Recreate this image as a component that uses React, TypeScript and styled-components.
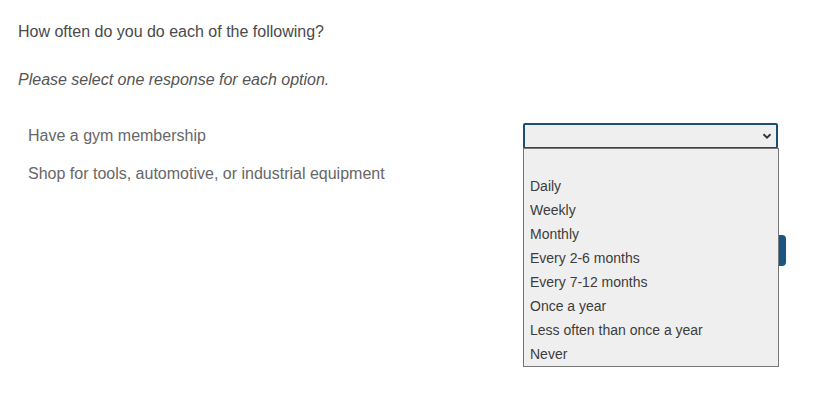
import React from "react";
import styled, { createGlobalStyle } from "styled-components";

const Global = createGlobalStyle`
  html, body { margin: 0; padding: 0; background: #ffffff; }
  body { font-family: "Liberation Sans", Arial, sans-serif; }
`;

const Page = styled.div`
  box-sizing: border-box;
  min-height: 403px;
  padding: 22px 45px 0 18px;
  width: 831px;
`;

const Heading = styled.div`
  font-size: 16px;
  line-height: 20px;
  color: #4a4a4a;
`;

const Instruction = styled.div`
  margin-top: 28px;
  font-size: 16px;
  line-height: 20px;
  font-style: italic;
  color: #555555;
`;

const Table = styled.div`
  margin-top: 27px;
  display: flex;
  flex-direction: column;
`;

const Row = styled.div`
  height: 38px;
  display: flex;
  align-items: center;
  justify-content: space-between;
  padding: 0 8px 0 10px;
`;

const Label = styled.div`
  font-size: 16px;
  line-height: 20px;
  color: #676767;
`;

const SelectWrap = styled.div`
  position: relative;
  width: 255px;
`;

const SelectBox = styled.div<{ $open?: boolean }>`
  box-sizing: border-box;
  height: 26px;
  background: #efefef;
  border: 2px solid ${(p) => (p.$open ? "#1c4e70" : "#767676")};
  border-radius: 2px;
  display: flex;
  align-items: center;
  justify-content: flex-end;
  padding-right: 4px;
`;

const Chevron = styled.svg`
  width: 10px;
  height: 10px;
  display: block;
`;

const List = styled.ul`
  position: absolute;
  top: 25px;
  left: 0;
  z-index: 5;
  box-sizing: border-box;
  width: 256px;
  margin: 0;
  padding: 1px 0 0;
  list-style: none;
  background: #efefef;
  border: 1px solid #767676;
`;

const Option = styled.li`
  height: 24px;
  line-height: 24px;
  padding-left: 6px;
  font-size: 14px;
  color: #3c3c3c;
`;

const Footer = styled.div`
  margin-top: 42px;
  display: flex;
  justify-content: flex-end;
`;

const NextButton = styled.button`
  height: 31px;
  width: 90px;
  border: none;
  border-radius: 4px;
  background: #1b5683;
  color: #ffffff;
  font-family: "Liberation Sans", Arial, sans-serif;
  font-size: 15px;
`;

const options = [
  "",
  "Daily",
  "Weekly",
  "Monthly",
  "Every 2-6 months",
  "Every 7-12 months",
  "Once a year",
  "Less often than once a year",
  "Never",
];

const ChevronIcon = () => (
  <Chevron viewBox="0 0 10 10">
    <path d="M1.5 3.2 L5 6.6 L8.5 3.2" fill="none" stroke="#333" strokeWidth="1.9" />
  </Chevron>
);

const rows = ["Have a gym membership", "Shop for tools, automotive, or industrial equipment"];

export default function App() {
  return (
    <>
      <Global />
      <Page>
        <Heading>How often do you do each of the following?</Heading>
        <Instruction>Please select one response for each option.</Instruction>
        <Table>
          {rows.map((r, i) => (
            <Row key={r}>
              <Label>{r}</Label>
              <SelectWrap>
                <SelectBox $open={i === 0}>
                  <ChevronIcon />
                </SelectBox>
                {i === 0 && (
                  <List>
                    {options.map((o, j) => (
                      <Option key={j}>{o}</Option>
                    ))}
                  </List>
                )}
              </SelectWrap>
            </Row>
          ))}
        </Table>
        <Footer>
          <NextButton>Next</NextButton>
        </Footer>
      </Page>
    </>
  );
}
